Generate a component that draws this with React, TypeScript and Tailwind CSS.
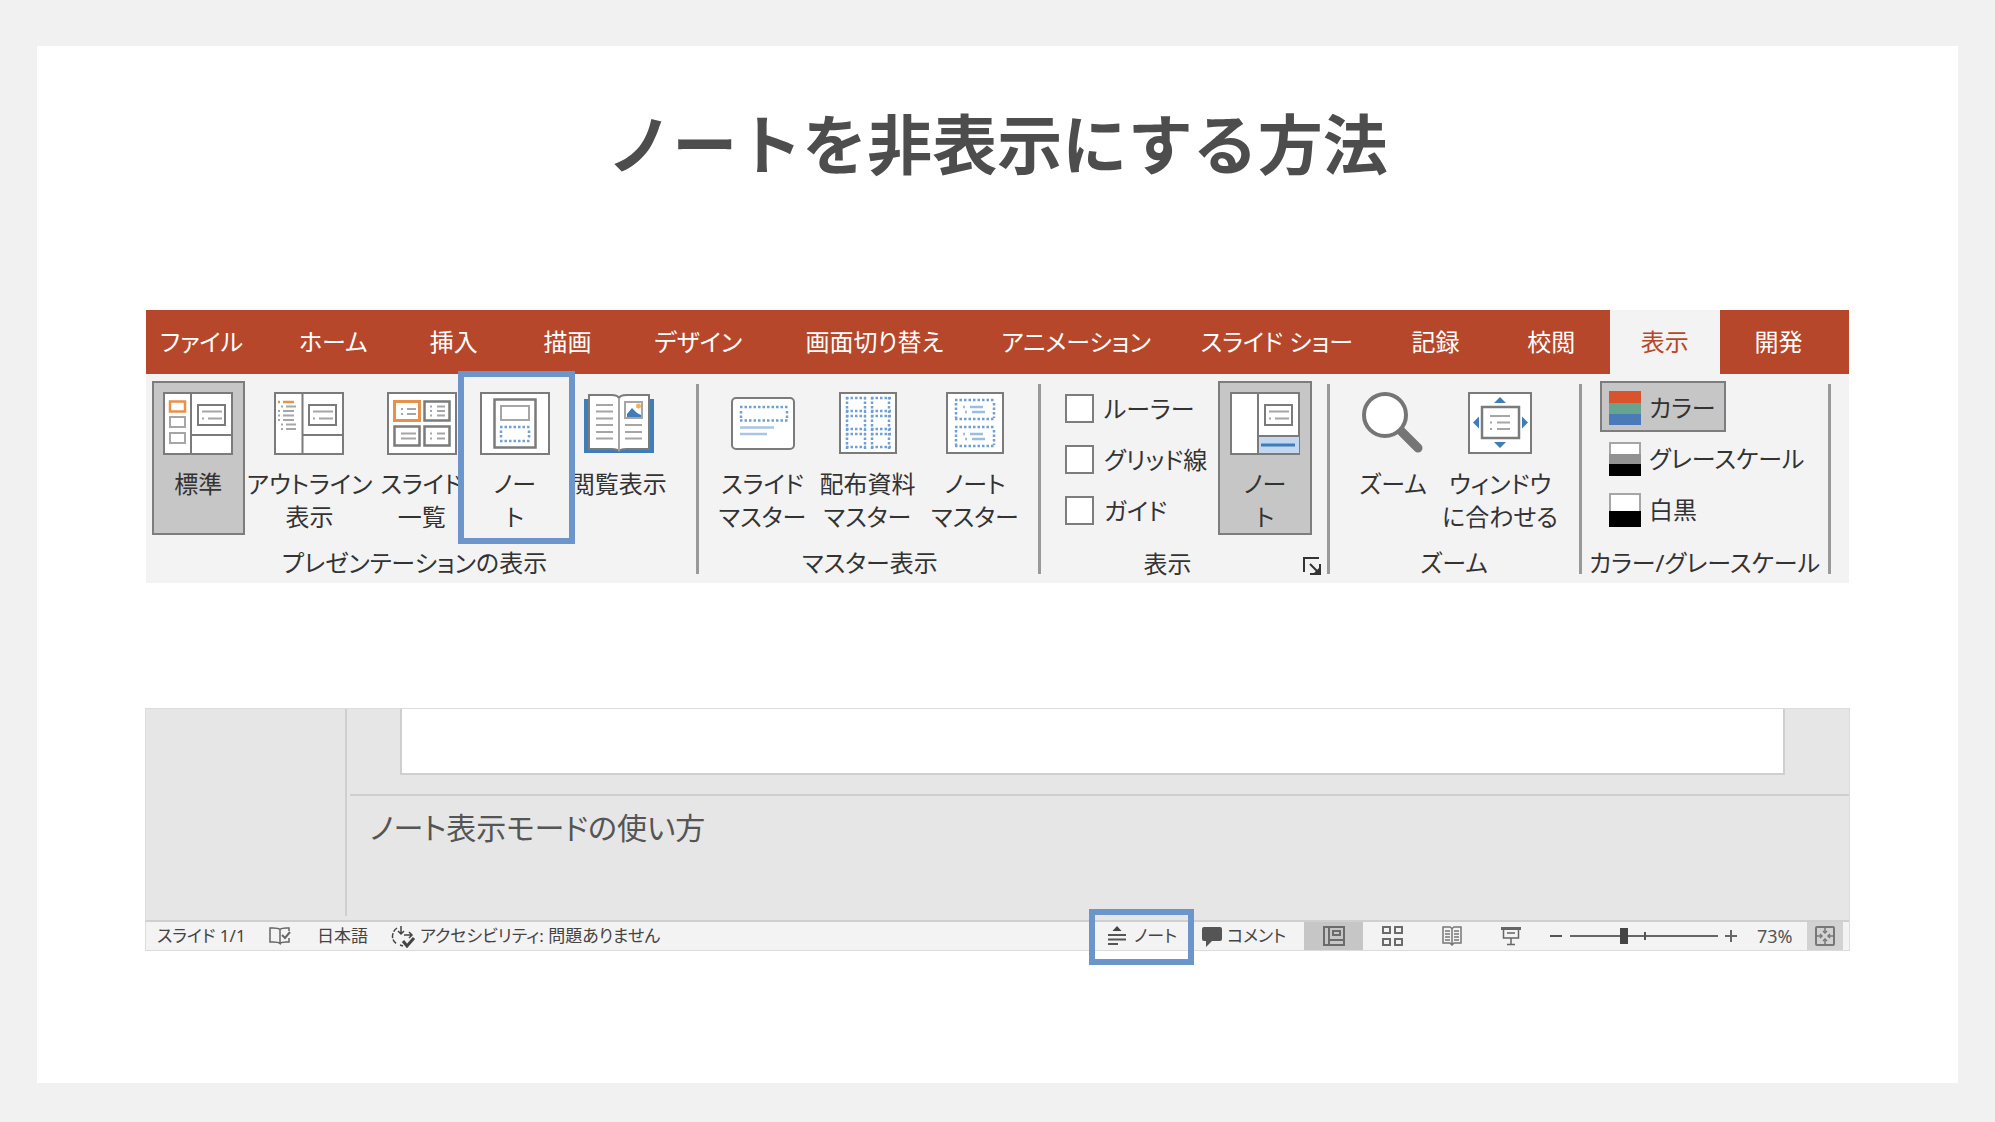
import React, { useState } from 'react';
import clsx from 'clsx';

const GRAY = '#7b7b7b';
const LIGHT = '#a6a6a6';
const ORANGE = '#e8914a';
const BLUE = '#3f7cba';
const DOT = '#6f9fd4';

const tabs = ['ファイル', 'ホーム', '挿入', '描画', 'デザイン', '画面切り替え', 'アニメーション', 'スライド ショー', '記録', '校閲', '表示', '開発'];

/* ---------- ribbon icons ---------- */

function SlideFrame({ x = 34, y = 12 }: { x?: number; y?: number }) {
  return (
    <g transform={`translate(${x} ${y})`}>
      <rect x="1" y="1" width="27" height="20" fill="#fff" stroke={GRAY} strokeWidth="2" />
      <path d="M5 7.500h20M5 14.500h2M11 14.500h14" stroke={LIGHT} strokeWidth="2" />
    </g>
  );
}

function NormalIcon() {
  return (
    <svg width="70" height="63" viewBox="0 0 70 63" fill="none">
      <rect x="1" y="1" width="68" height="61" fill="#fff" stroke={GRAY} strokeWidth="2" />
      <path d="M28 1v61M28 43h41" stroke={GRAY} strokeWidth="2" />
      <rect x="7" y="9.500" width="15" height="10" stroke={ORANGE} strokeWidth="2.500" />
      <rect x="7" y="25" width="15" height="10" stroke={LIGHT} strokeWidth="2" />
      <rect x="7" y="41" width="15" height="10" stroke={LIGHT} strokeWidth="2" />
      <SlideFrame />
    </svg>
  );
}

function OutlineIcon() {
  return (
    <svg width="70" height="63" viewBox="0 0 70 63" fill="none">
      <rect x="1" y="1" width="68" height="61" fill="#fff" stroke={GRAY} strokeWidth="2" />
      <path d="M28.500 1v61M28.500 43h41" stroke={GRAY} strokeWidth="2" />
      <path d="M4 10h2M9 10h11" stroke={ORANGE} strokeWidth="2.500" />
      <path
        d="M7 14.500h2M12 14.500h10M4 19h2M9 19h11M4 23.500h2M9 23.500h11M4 28h2M9 28h11M7 32.500h2M12 32.500h10M7 37h2M12 37h10"
        stroke={LIGHT}
        strokeWidth="2"
      />
      <SlideFrame />
    </svg>
  );
}

function SorterIcon() {
  return (
    <svg width="70" height="63" viewBox="0 0 70 63" fill="none">
      <rect x="1" y="1" width="68" height="61" fill="#fff" stroke={GRAY} strokeWidth="2" />
      <rect x="7.500" y="9.500" width="25" height="19" stroke={ORANGE} strokeWidth="3" />
      <rect x="37.500" y="9.500" width="25" height="19" stroke={GRAY} strokeWidth="2.500" />
      <rect x="7.500" y="34.500" width="25" height="19" stroke={GRAY} strokeWidth="2.500" />
      <rect x="37.500" y="34.500" width="25" height="19" stroke={GRAY} strokeWidth="2.500" />
      <path
        d="M14 17h2M20 17h9M14 22h2M20 22h9M43 14.500h2M50 14.500h8M43 19h2M50 19h8M43 23.500h2M50 23.500h8M14 41.500h15M14 46.500h15M43 41.500h2M50 41.500h8M43 46.500h2M50 46.500h8"
        stroke={LIGHT}
        strokeWidth="2"
      />
    </svg>
  );
}

function NotesPageIcon() {
  return (
    <svg width="70" height="63" viewBox="0 0 70 63" fill="none">
      <rect x="1" y="1" width="68" height="61" fill="#fff" stroke={GRAY} strokeWidth="2" />
      <rect x="14.500" y="7.500" width="41" height="48" stroke={GRAY} strokeWidth="2.500" />
      <rect x="21" y="14" width="28" height="14" stroke={LIGHT} strokeWidth="2" />
      <path d="M20 35h30M20 49h30" stroke={DOT} strokeWidth="2.500" strokeDasharray="2.500 2" />
      <path d="M21 38.500v9M49 38.500v9" stroke={DOT} strokeWidth="2.500" strokeDasharray="2.500 2" />
    </svg>
  );
}

function ReadingIcon() {
  return (
    <svg width="70" height="63" viewBox="0 0 70 63" fill="none">
      <path d="M0 7h70v54H0z" fill={BLUE} />
      <path d="M5 3h22q8 0 8 4q0-4 8-4h22v54H43q-8 0-8 3q0-3-8-3H5z" fill="#fff" stroke={GRAY} strokeWidth="2" />
      <path d="M35 6v53" stroke={LIGHT} strokeWidth="2" />
      <path d="M12 13h17M12 19.500h17M12 26.500h17M12 33h17M12 40h17M12 46.500h17M41 33h17M41 40h17M41 46.500h17" stroke={LIGHT} strokeWidth="2" />
      <rect x="41" y="10" width="17" height="16" stroke={LIGHT} strokeWidth="2" fill="#fff" />
      <circle cx="54.500" cy="14" r="2.500" fill="#efb45c" />
      <path d="M43 25v-3l5-6 5 5 4 2v2z" fill={BLUE} />
    </svg>
  );
}

function SlideMasterIcon() {
  return (
    <svg width="64" height="63" viewBox="0 0 64 63" fill="none">
      <rect x="1" y="6" width="62" height="51" rx="4" fill="#fff" stroke={GRAY} strokeWidth="2" />
      <path d="M9 15h48M9 28.500h48" stroke={DOT} strokeWidth="2.500" strokeDasharray="2.500 2" />
      <path d="M10 19v7M56 19v7" stroke={DOT} strokeWidth="2.500" strokeDasharray="2.500 2" />
      <path d="M9 35.500h34M9 42h27" stroke="#aac5e4" strokeWidth="2.500" />
    </svg>
  );
}

function HandoutMasterIcon() {
  return (
    <svg width="58" height="63" viewBox="0 0 58 63" fill="none">
      <rect x="1" y="1" width="56" height="60" fill="#fff" stroke={GRAY} strokeWidth="2" />
      {[8, 26, 33, 50].map((x) => (
        <path key={x} d={`M${x} 5v52`} stroke={DOT} strokeWidth="2.500" strokeDasharray="2.500 2" />
      ))}
      {[6, 19, 24, 37, 42, 55].map((y) => (
        <path key={y} d={`M7 ${y}h20M32 ${y}h20`} stroke={DOT} strokeWidth="2.500" strokeDasharray="2.500 2" />
      ))}
    </svg>
  );
}

function NotesMasterIcon() {
  return (
    <svg width="58" height="63" viewBox="0 0 58 63" fill="none">
      <rect x="1" y="1" width="56" height="60" fill="#fff" stroke={GRAY} strokeWidth="2" />
      {[8, 35].map((y) => (
        <g key={y} stroke={DOT} strokeWidth="2.500">
          <path d={`M9 ${y}h40M9 ${y + 19}h40`} strokeDasharray="2.500 2" />
          <path d={`M10 ${y + 3}v15M48 ${y + 3}v15`} strokeDasharray="2.500 2" />
          <path d={`M17 ${y + 7}h2M24 ${y + 7}h13M19 ${y + 12}h2M26 ${y + 12}h13`} stroke="#9dbde0" />
        </g>
      ))}
    </svg>
  );
}

function NotesPaneIcon() {
  return (
    <svg width="70" height="63" viewBox="0 0 70 63" fill="none">
      <rect x="1" y="1" width="68" height="61" fill="#fff" stroke={GRAY} strokeWidth="2" />
      <path d="M28 44h41v17H28z" fill="#c3d8ef" />
      <path d="M28 1v61M28 44h41" stroke={GRAY} strokeWidth="2" />
      <path d="M31 53h34" stroke={BLUE} strokeWidth="3" />
      <SlideFrame />
    </svg>
  );
}

function ZoomIcon() {
  return (
    <svg width="62" height="63" viewBox="0 0 62 63" fill="none">
      <path d="M38 38l18 18" stroke="#757575" strokeWidth="9" strokeLinecap="round" />
      <circle cx="23" cy="23" r="21" fill="#fff" stroke="#757575" strokeWidth="4" />
    </svg>
  );
}

function FitIcon() {
  return (
    <svg width="64" height="63" viewBox="0 0 64 63" fill="none">
      <rect x="1" y="1" width="62" height="60" fill="#fff" stroke={GRAY} strokeWidth="2" />
      <rect x="14" y="15" width="37" height="31" stroke={GRAY} strokeWidth="2.500" />
      <path d="M22 24h20M22 30.500h2M29 30.500h13M22 37h2M29 37h13" stroke={LIGHT} strokeWidth="2" />
      <path d="M32 5l6 6H26zM32 56l6-6H26zM5 30.500l6-6v12zM60 30.500l-6-6v12z" fill={BLUE} />
    </svg>
  );
}

function SwatchIcon({ kind }: { kind: string }) {
  return (
    <svg width="32" height="34" viewBox="0 0 32 34" fill="none" className="shrink-0">
      {kind === 'color' && (
        <>
          <path d="M0 0h32v12H0z" fill="#d9532c" />
          <path d="M0 12h32v11H0z" fill="#67a48f" />
          <path d="M0 23h32v11H0z" fill="#4a7ab8" />
        </>
      )}
      {kind === 'gray' && (
        <>
          <rect x="1" y="1" width="30" height="32" fill="#fff" stroke={LIGHT} strokeWidth="2" />
          <path d="M0 12h32v11H0z" fill="#929292" />
          <path d="M0 22h32v12H0z" fill="#000" />
        </>
      )}
      {kind === 'mono' && (
        <>
          <rect x="1" y="1" width="30" height="32" fill="#fff" stroke={LIGHT} strokeWidth="2" />
          <path d="M0 18h32v16H0z" fill="#000" />
        </>
      )}
    </svg>
  );
}

/* ---------- ribbon parts ---------- */

interface RibbonButtonProps {
  icon: React.ReactNode;
  lines: string[];
  active?: boolean;
  marked?: boolean;
}

function RibbonButton({ icon, lines, active, marked }: RibbonButtonProps) {
  return (
    <button
      className={clsx(
        'relative flex flex-col items-center h-[154px] border-2 pt-[9px]',
        active ? 'border-[#7d7d7d] bg-[#c6c6c6]' : 'border-transparent',
      )}
    >
      {icon}
      <span className="mt-3 flex flex-col items-center leading-[33px] whitespace-nowrap">
        {lines.map((line) => (
          <span key={line}>{line}</span>
        ))}
      </span>
      {marked && <span className="absolute -top-3 -bottom-[11px] -left-[13px] -right-4 z-10 border-6 border-[#6c96cb]" />}
    </button>
  );
}

interface GroupProps {
  title: string;
  titleClass?: string;
  launcher?: boolean;
  children: React.ReactNode;
}

function Group({ title, titleClass, launcher, children }: GroupProps) {
  return (
    <section className="relative flex flex-col pt-[7px]">
      {children}
      <div className="relative mt-3 text-center leading-8 whitespace-nowrap">
        <h2 className={titleClass}>{title}</h2>
        {launcher && (
          <button aria-label="グリッドの設定" className="absolute right-2 top-2">
            <svg width="20" height="20" viewBox="0 0 20 20" fill="none" stroke="#333" strokeWidth="2">
              <path d="M2 16V2h15M8 8l9 9M18 8v10H8" />
              <path d="M18 11v7h-7z" fill="#333" stroke="none" />
            </svg>
          </button>
        )}
      </div>
      <div className="absolute right-0 top-[10px] h-[190px] w-[3px] bg-[#999]" />
    </section>
  );
}

function Ribbon() {
  const [activeTab, setActiveTab] = useState('表示');
  const [colorMode, setColorMode] = useState('color');
  const modes = [
    { id: 'color', label: 'カラー' },
    { id: 'gray', label: 'グレースケール' },
    { id: 'mono', label: '白黒' },
  ];

  return (
    <div className="mx-[109px] text-2xl text-[#333]">
      <nav className="grid h-16 grid-cols-[123fr_128fr_113fr_114fr_147fr_205fr_198fr_203fr_114fr_117fr_110fr_129fr] bg-[#b7472a]">
        {tabs.map((tab) => (
          <button
            key={tab}
            onClick={() => setActiveTab(tab)}
            className={clsx(
              'whitespace-nowrap first:pr-3 last:pr-3',
              tab === activeTab ? 'bg-[#f3f3f3] text-[#b7472a]' : 'text-white',
            )}
          >
            {tab}
          </button>
        ))}
      </nav>

      <div className="grid h-[209px] grid-cols-[553fr_342fr_289fr_252fr_249fr_18fr] bg-[#f3f3f3]">
        <Group title="プレゼンテーションの表示" titleClass="pr-4">
          <div className="grid grid-cols-[94fr_124fr_96fr_93fr_118fr] pl-[6px] pr-[22px]">
            <RibbonButton icon={<NormalIcon />} lines={['標準']} active />
            <RibbonButton icon={<OutlineIcon />} lines={['アウトライン', '表示']} />
            <RibbonButton icon={<SorterIcon />} lines={['スライド', '一覧']} />
            <RibbonButton icon={<NotesPageIcon />} lines={['ノー', 'ト']} marked />
            <RibbonButton icon={<ReadingIcon />} lines={['閲覧表示']} />
          </div>
        </Group>

        <Group title="マスター表示">
          <div className="grid grid-cols-[103fr_107fr_108fr] px-3">
            <RibbonButton icon={<SlideMasterIcon />} lines={['スライド', 'マスター']} />
            <RibbonButton icon={<HandoutMasterIcon />} lines={['配布資料', 'マスター']} />
            <RibbonButton icon={<NotesMasterIcon />} lines={['ノート', 'マスター']} />
          </div>
        </Group>

        <Group title="表示" titleClass="pr-9" launcher>
          <div className="grid grid-cols-[1fr_94px] pl-6 pr-[18px]">
            <div className="flex flex-col pt-[2px]">
              {['ルーラー', 'グリッド線', 'ガイド'].map((label) => (
                <label key={label} className="flex h-[51px] items-center gap-[10px] whitespace-nowrap">
                  <input type="checkbox" className="size-[29px] shrink-0 appearance-none border-2 border-[#7d7d7d] bg-white checked:bg-[#b7472a]" />
                  {label}
                </label>
              ))}
            </div>
            <RibbonButton icon={<NotesPaneIcon />} lines={['ノー', 'ト']} active />
          </div>
        </Group>

        <Group title="ズーム" titleClass="pr-1">
          <div className="grid grid-cols-[96fr_120fr] pl-4 pr-[22px]">
            <RibbonButton icon={<ZoomIcon />} lines={['ズーム']} />
            <RibbonButton icon={<FitIcon />} lines={['ウィンドウ', 'に合わせる']} />
          </div>
        </Group>

        <Group title="カラー/グレースケール" titleClass="pr-1">
          <div className="flex h-[154px] flex-col items-start pl-[18px]">
            {modes.map((mode) => (
              <button
                key={mode.id}
                onClick={() => setColorMode(mode.id)}
                className={clsx(
                  'flex h-[52px] min-w-[126px] items-center gap-2 border-2 px-[7px] pt-[2px] whitespace-nowrap',
                  mode.id === colorMode ? 'border-[#7d7d7d] bg-[#c6c6c6]' : 'border-transparent',
                )}
              >
                <SwatchIcon kind={mode.id} />
                {mode.label}
              </button>
            ))}
          </div>
        </Group>
      </div>
    </div>
  );
}

/* ---------- editor and status bar ---------- */

function StatusBar() {
  return (
    <footer className="flex h-[30px] items-stretch border-t-2 border-[#cfcfcf] bg-[#f3f3f3] text-[17px] leading-7 whitespace-nowrap">
      <span className="ml-[11px] w-28">スライド 1/1</span>
      <button aria-label="スペル チェック" className="w-12">
        <svg width="22" height="20" viewBox="0 0 22 20" fill="none" stroke="#666" strokeWidth="1.500">
          <path d="M11 17.500C9 15.500 5 16 1 16V2c4 0 8-.500 10 1.500zM11 3.500C13 1.500 16 2 20 2v3M11 17.500c2-2 5-1.500 9-1.500v-4" />
          <path d="M13 9l3 3 5-6" strokeWidth="2" />
        </svg>
      </button>
      <button className="w-[74px] text-left">日本語</button>
      <button className="flex items-center gap-1">
        <svg width="25" height="23" viewBox="0 0 25 23" fill="none" stroke="#444" strokeWidth="1.500">
          <path d="M6 3C0 7 0 16 6 19M9 20l3 1" strokeDasharray="5 1.500" />
          <path d="M10 1v8M7 6l3 3 3-3M13 10h8M18 7l3 3-3 3" />
          <path d="M12 16l4 5 7-8" strokeWidth="3" />
        </svg>
        アクセシビリティ: 問題ありません
      </button>

      <button className="relative ml-auto flex w-[92px] items-center gap-2 pl-[11px]">
        <svg width="18" height="20" viewBox="0 0 18 20" fill="none" stroke="#555" strokeWidth="2">
          <path d="M9 0l4.500 5h-9z" fill="#444" stroke="none" />
          <path d="M0 9h18M0 13.500h18M0 18h10" />
        </svg>
        ノート
        <span className="absolute -top-[13px] -bottom-[15px] -left-2 -right-[5px] z-10 border-6 border-[#6c96cb]" />
      </button>
      <button className="flex w-[115px] items-center gap-1 pl-3">
        <svg width="22" height="21" viewBox="0 0 22 21" fill="#555">
          <path d="M3 1h16a2 2 0 0 1 2 2v10a2 2 0 0 1-2 2h-8l-6 6v-6H3a2 2 0 0 1-2-2V3a2 2 0 0 1 2-2z" />
        </svg>
        コメント
      </button>
      <button aria-label="標準" className="flex w-[59px] items-center justify-center bg-[#c6c6c6]">
        <svg width="22" height="20" viewBox="0 0 22 20" fill="none" stroke="#6b6b6b" strokeWidth="2">
          <path d="M1 1h20v18H1zM6 1v18M6 14h15" />
          <path d="M10 5h7v4h-7z" />
        </svg>
      </button>
      <button aria-label="スライド一覧" className="flex w-[59px] items-center justify-center">
        <svg width="22" height="20" viewBox="0 0 22 20" fill="none" stroke="#6b6b6b" strokeWidth="2">
          <path d="M1 1h7v6H1zM13 1h7v6h-7zM1 13h7v6H1zM13 13h7v6h-7z" />
        </svg>
      </button>
      <button aria-label="閲覧表示" className="flex w-[59px] items-center justify-center">
        <svg width="20" height="20" viewBox="0 0 20 20" fill="none" stroke="#777" strokeWidth="1.500">
          <path d="M1 1h7l2 1.500L12 1h7v16h-7l-2 2-2-2H1zM10 2v17" />
          <path d="M3 5h5M3 8h5M3 11h5M3 14h5M12 5h5M12 8h5M12 11h5M12 14h5" />
        </svg>
      </button>
      <button aria-label="スライド ショー" className="flex w-[59px] items-center justify-center">
        <svg width="20" height="20" viewBox="0 0 20 20" fill="none" stroke="#666" strokeWidth="1.500">
          <path d="M0 2.500h20" strokeWidth="3" />
          <path d="M2.500 3v9h15V3M6 7h8M10 12v6M6 18.500h8" />
        </svg>
      </button>
      <button aria-label="縮小" className="ml-[10px] flex w-5 items-center">
        <svg width="12" height="12" viewBox="0 0 12 12" stroke="#555" strokeWidth="2">
          <path d="M0 6h12" />
        </svg>
      </button>
      <div className="relative flex items-center">
        <input
          type="range"
          aria-label="ズーム"
          defaultValue={36}
          className="h-4 w-[148px] appearance-none bg-transparent [&::-webkit-slider-runnable-track]:h-[2px] [&::-webkit-slider-runnable-track]:bg-[#666] [&::-webkit-slider-thumb]:-mt-[7px] [&::-webkit-slider-thumb]:h-4 [&::-webkit-slider-thumb]:w-2 [&::-webkit-slider-thumb]:appearance-none [&::-webkit-slider-thumb]:bg-[#444]"
        />
        <span className="absolute left-1/2 h-2 w-[2px] bg-[#555]" />
      </div>
      <button aria-label="拡大" className="flex w-[39px] items-center pl-[7px]">
        <svg width="12" height="12" viewBox="0 0 12 12" stroke="#666" strokeWidth="2">
          <path d="M0 6h12M6 0v12" />
        </svg>
      </button>
      <span className="w-[50px] text-lg leading-7 text-[#555]">73%</span>
      <button aria-label="ウィンドウに合わせる" className="mr-[6px] flex w-9 items-center justify-center bg-[#d2d2d2]">
        <svg width="20" height="20" viewBox="0 0 20 20" fill="none" stroke="#777" strokeWidth="2">
          <rect x="1" y="1" width="18" height="18" rx="1" />
          <path d="M10 2v5M10 13v5M2 10h5M13 10h5" strokeWidth="1.500" />
          <path d="M8 5l2 2 2-2M8 15l2-2 2 2M5 8l2 2-2 2M15 8l-2 2 2 2" strokeWidth="1.500" />
        </svg>
      </button>
    </footer>
  );
}

function Editor() {
  return (
    <div className="mx-[108px] border border-[#dcdcdc] bg-[#e6e6e6] text-[#444]">
      <div className="flex h-[211px] pb-1">
        <aside className="w-[201px] shrink-0 border-r-2 border-[#cfcfcf]" />
        <main className="flex flex-1 flex-col pl-[3px]">
          <div className="h-[87px] border-b-2 border-[#cfcfcf] pl-[50px] pr-16">
            <div className="h-[66px] border-2 border-t-0 border-[#cfcfcf] bg-white" />
          </div>
          <p className="px-5 pt-[10px] text-3xl leading-[44px] text-[#555]">ノート表示モードの使い方</p>
        </main>
      </div>
      <StatusBar />
    </div>
  );
}

export default function App() {
  return (
    <div className="flex min-h-screen bg-[#f1f1f1] px-[37px] pt-[46px] pb-[39px] font-['Noto_Sans','Noto_Sans_CJK_JP',sans-serif] [font-feature-settings:'palt']">
      <div className="w-full bg-white">
        <h1 className="pt-[58px] text-center text-[65px] leading-[80px] font-bold text-[#4d4d4d] [font-feature-settings:normal]">
          ノートを非表示にする方法
        </h1>
        <div className="mt-[126px]">
          <Ribbon />
        </div>
        <div className="mt-[125px]">
          <Editor />
        </div>
      </div>
    </div>
  );
}
